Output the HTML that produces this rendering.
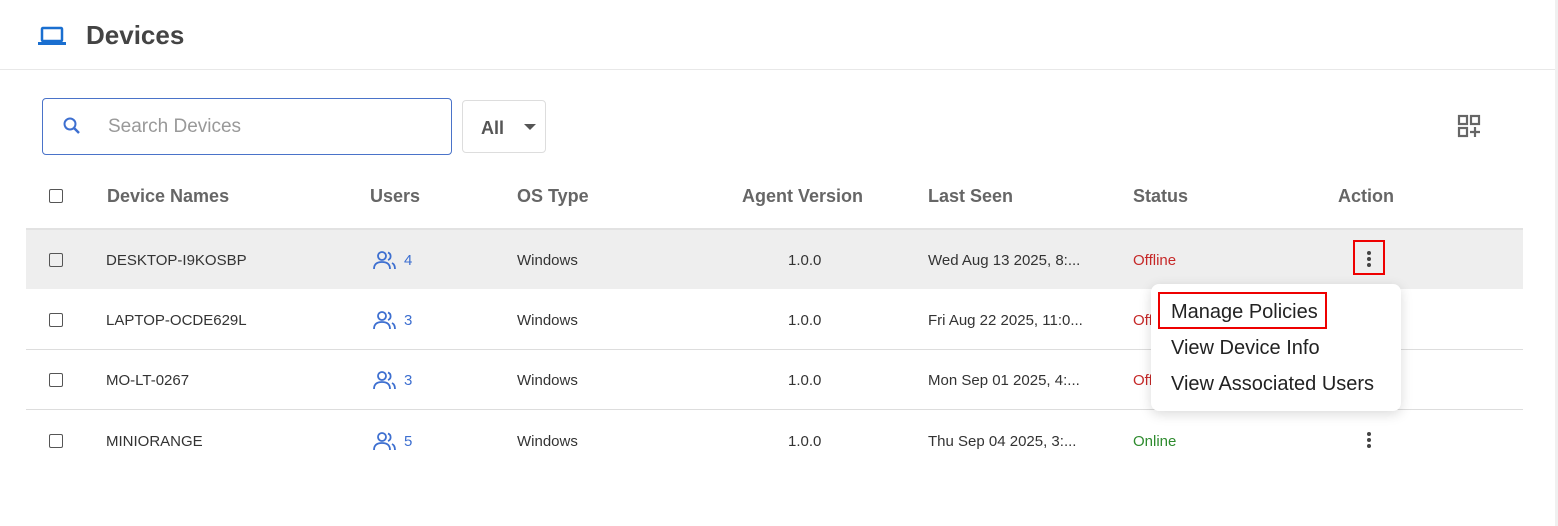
<!DOCTYPE html>
<html><head><style>
*{box-sizing:border-box;margin:0;padding:0}
body{width:1558px;height:526px;background:#fff;font-family:"Liberation Sans",sans-serif;position:relative;overflow:hidden;color:#333}
.a{position:absolute;white-space:nowrap}
.hdr{font-weight:bold;font-size:18px;color:#666;top:186px}
.cb{position:absolute;width:14px;height:14px;border:1.5px solid #555;border-radius:2px;left:49px}
.cell{position:absolute;font-size:15px;color:#333;white-space:nowrap}
.line{position:absolute;left:26px;width:1497px;height:1px;background:#ddd}
.dots{position:absolute;width:4px;left:1367px}
.dots i{display:block;width:4px;height:4px;border-radius:2px;background:#444;margin-bottom:2px}
</style></head><body>
<div class="a" style="left:0;top:69px;width:1558px;height:1px;background:#e8e8e8"></div>
<div class="a" style="left:1555px;top:0;width:3px;height:526px;background:#f0f0f0"></div>
<svg class="a" style="left:38px;top:26px" width="28" height="20" viewBox="0 0 28 20"><rect x="4" y="2" width="20" height="13" rx="1" fill="none" stroke="#1a6fd0" stroke-width="2.5"/><rect x="0" y="16" width="28" height="3" fill="#1a6fd0"/></svg>
<div class="a" style="left:86px;top:20px;font-size:26px;font-weight:bold;color:#444">Devices</div>
<div class="a" style="left:42px;top:98px;width:410px;height:57px;border:1px solid #4a73c9;border-radius:4px"></div>
<svg class="a" style="left:62px;top:116px" width="20" height="20" viewBox="0 0 20 20"><circle cx="8" cy="8" r="5.5" fill="none" stroke="#3d6fd0" stroke-width="2"/><line x1="12" y1="12" x2="17" y2="17" stroke="#3d6fd0" stroke-width="2.5"/></svg>
<div class="a" style="left:108px;top:116px;font-size:19px;color:#999">Search Devices</div>
<div class="a" style="left:462px;top:100px;width:84px;height:53px;border:1px solid #ddd;border-radius:4px"></div>
<div class="a" style="left:481px;top:118px;font-size:18px;font-weight:bold;color:#555">All</div>
<div class="a" style="left:524px;top:124px;width:0;height:0;border-left:6px solid transparent;border-right:6px solid transparent;border-top:6px solid #555"></div>
<svg class="a" style="left:1457px;top:114px" width="26" height="26" viewBox="0 0 26 26" fill="none" stroke="#666" stroke-width="2.2"><rect x="2" y="2" width="8" height="8"/><rect x="14" y="2" width="8" height="8"/><rect x="2" y="14" width="8" height="8"/><path d="M18 13v10M13 18h10"/></svg>
<div class="cb" style="top:189px"></div>
<div class="a hdr" style="left:107px">Device Names</div>
<div class="a hdr" style="left:370px">Users</div>
<div class="a hdr" style="left:517px">OS Type</div>
<div class="a hdr" style="left:742px">Agent Version</div>
<div class="a hdr" style="left:928px">Last Seen</div>
<div class="a hdr" style="left:1133px">Status</div>
<div class="a hdr" style="left:1338px">Action</div>
<div class="a" style="left:26px;top:228px;width:1497px;height:61px;background:#eee;border-top:2px solid #e2e2e2"></div>
<div class="line" style="top:349px"></div>
<div class="line" style="top:409px"></div>

<div class="cb" style="top:253px"></div><div class="cell" style="left:106px;top:252px">DESKTOP-I9KOSBP</div>
<div class="cb" style="top:313px"></div><div class="cell" style="left:106px;top:312px">LAPTOP-OCDE629L</div>
<div class="cb" style="top:373px"></div><div class="cell" style="left:106px;top:372px">MO-LT-0267</div>
<div class="cb" style="top:434px"></div><div class="cell" style="left:106px;top:433px">MINIORANGE</div>

<svg style="position:absolute;left:373px;top:250px" width="24" height="20" viewBox="0 0 24 20" fill="none" stroke="#3d6fd0" stroke-width="1.8"><circle cx="9" cy="6" r="4"/><path d="M1 19c0-5 3-7 8-7s8 2 8 7"/><path d="M15 2.5a4 4 0 0 1 0 7.5M19 13c2 1 3 3 3 6"/></svg>
<div class="cell" style="left:404px;top:252px;color:#3d6fd0">4</div>
<svg style="position:absolute;left:373px;top:310px" width="24" height="20" viewBox="0 0 24 20" fill="none" stroke="#3d6fd0" stroke-width="1.8"><circle cx="9" cy="6" r="4"/><path d="M1 19c0-5 3-7 8-7s8 2 8 7"/><path d="M15 2.5a4 4 0 0 1 0 7.5M19 13c2 1 3 3 3 6"/></svg>
<div class="cell" style="left:404px;top:312px;color:#3d6fd0">3</div>
<svg style="position:absolute;left:373px;top:370px" width="24" height="20" viewBox="0 0 24 20" fill="none" stroke="#3d6fd0" stroke-width="1.8"><circle cx="9" cy="6" r="4"/><path d="M1 19c0-5 3-7 8-7s8 2 8 7"/><path d="M15 2.5a4 4 0 0 1 0 7.5M19 13c2 1 3 3 3 6"/></svg>
<div class="cell" style="left:404px;top:372px;color:#3d6fd0">3</div>
<svg style="position:absolute;left:373px;top:431px" width="24" height="20" viewBox="0 0 24 20" fill="none" stroke="#3d6fd0" stroke-width="1.8"><circle cx="9" cy="6" r="4"/><path d="M1 19c0-5 3-7 8-7s8 2 8 7"/><path d="M15 2.5a4 4 0 0 1 0 7.5M19 13c2 1 3 3 3 6"/></svg>
<div class="cell" style="left:404px;top:433px;color:#3d6fd0">5</div>

<div class="cell" style="left:517px;top:252px">Windows</div>
<div class="cell" style="left:517px;top:312px">Windows</div>
<div class="cell" style="left:517px;top:372px">Windows</div>
<div class="cell" style="left:517px;top:433px">Windows</div>
<div class="cell" style="left:788px;top:252px">1.0.0</div>
<div class="cell" style="left:788px;top:312px">1.0.0</div>
<div class="cell" style="left:788px;top:372px">1.0.0</div>
<div class="cell" style="left:788px;top:433px">1.0.0</div>
<div class="cell" style="left:928px;top:252px">Wed Aug 13 2025, 8:...</div>
<div class="cell" style="left:928px;top:312px">Fri Aug 22 2025, 11:0...</div>
<div class="cell" style="left:928px;top:372px">Mon Sep 01 2025, 4:...</div>
<div class="cell" style="left:928px;top:433px">Thu Sep 04 2025, 3:...</div>
<div class="cell" style="left:1133px;top:252px;color:#c62828">Offline</div>
<div class="cell" style="left:1133px;top:312px;color:#c62828">Offline</div>
<div class="cell" style="left:1133px;top:372px;color:#c62828">Offline</div>
<div class="cell" style="left:1133px;top:433px;color:#2e8b2e">Online</div>

<div class="a" style="left:1353px;top:240px;width:32px;height:35px;border:2px solid #e00"></div>
<div class="dots" style="top:251px"><i></i><i></i><i></i></div>
<div class="dots" style="top:432px"><i></i><i></i><i></i></div>

<div class="a" style="left:1151px;top:284px;width:250px;height:127px;background:#fff;border-radius:8px;box-shadow:0 3px 12px rgba(0,0,0,0.15)"></div>
<div class="a" style="left:1158px;top:292px;width:169px;height:37px;border:2px solid #e00"></div>
<div class="a" style="left:1171px;top:301px;font-size:20px;color:#222">Manage Policies</div>
<div class="a" style="left:1171px;top:337px;font-size:20px;color:#222">View Device Info</div>
<div class="a" style="left:1171px;top:373px;font-size:20px;color:#222">View Associated Users</div>
</body></html>
